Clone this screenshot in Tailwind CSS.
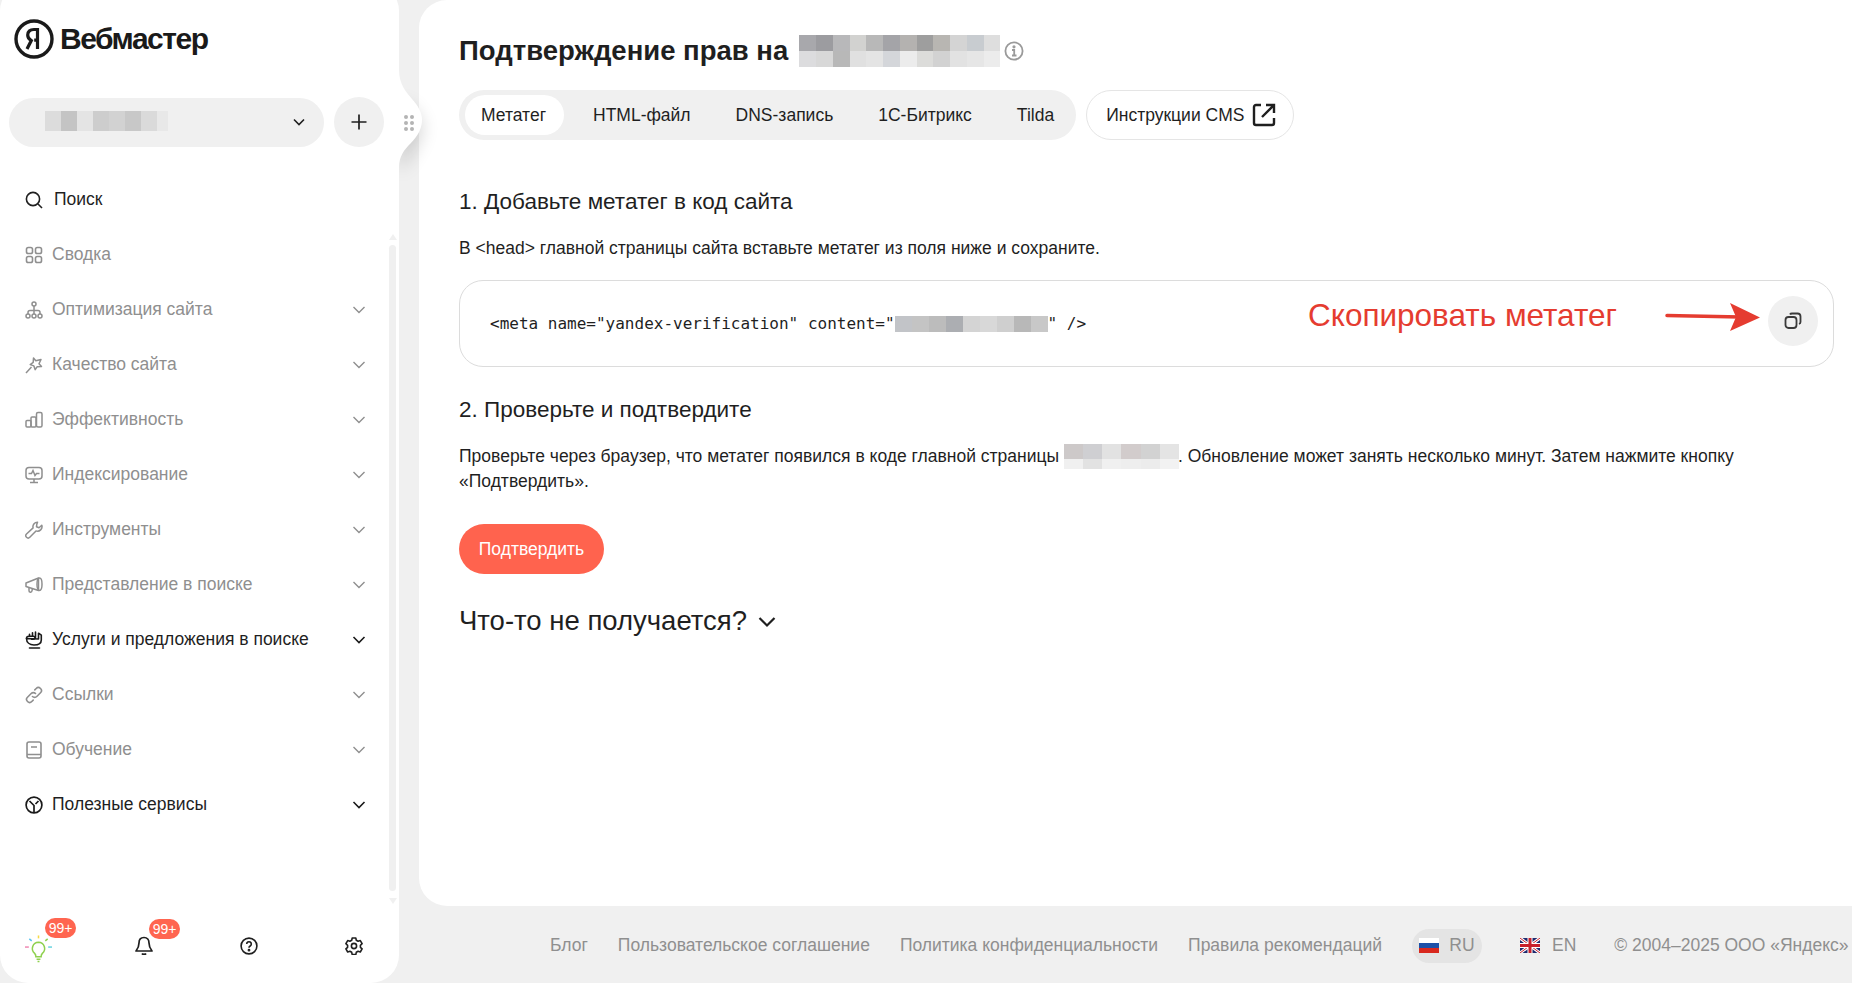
<!DOCTYPE html>
<html lang="ru">
<head>
    <meta charset="UTF-8">
    <title>Яндекс Вебмастер</title>
    <script src="https://cdn.jsdelivr.net/npm/@tailwindcss/browser@4"></script>
</head>
<body class="bg-[#f0f0f0] font-['Liberation_Sans',Arial,sans-serif] text-[#1f1f1f] overflow-hidden">
<div class="relative flex w-[1852px] h-[983px] overflow-hidden">

    <!-- Sidebar -->
    <aside class="relative z-10 w-[399px] shrink-0 h-[1000px] -mt-[17px] bg-white rounded-[28px] flex flex-col">
        <div class="h-[112px] pl-[14px] pt-[36px] flex items-start gap-[6px] shrink-0">
            <svg class="w-[40px] h-[40px] shrink-0" viewBox="0 0 40 40" fill="none">
                <circle cx="20" cy="20" r="18" stroke="#1a1a1a" stroke-width="3.400"/>
                <path d="M23.500 30V10.500h-3.600c-4 0-6.200 2.200-6.200 5.500 0 2.700 1.200 4.200 3.600 5.600L13 30M23.500 21.200h-3.300" stroke="#1a1a1a" stroke-width="3.200"/>
            </svg>
            <span class="text-[30px] leading-[40px] font-bold tracking-[-1.500px] text-[#1a1a1a]">Вебмастер</span>
        </div>
        <div class="flex items-center pl-[9px] mt-[2px] shrink-0">
            <div class="w-[315px] h-[49px] rounded-full bg-[#f0f0f0] flex items-center pl-[36px] pr-[17px] justify-between">
                <div class="flex w-[123px] h-[20px] -mt-[3px]">
                    <div class="w-[16px] bg-[#dcdcdc]"></div><div class="w-[16px] bg-[#c4c4c4]"></div><div class="w-[16px] bg-[#e4e4e4]"></div><div class="w-[16px] bg-[#cdcdcd]"></div><div class="w-[16px] bg-[#d2d2d2]"></div><div class="w-[16px] bg-[#c8c8c8]"></div><div class="w-[16px] bg-[#dadada]"></div><div class="w-[11px] bg-[#e8e8e8]"></div>
                </div>
                <svg class="w-[16px] h-[16px]" viewBox="0 0 16 16" fill="none"><path d="M3 5.500 8 10.500 13 5.500" stroke="#1f1f1f" stroke-width="1.600"/></svg>
            </div>
            <div class="ml-[10px] w-[50px] h-[50px] rounded-full bg-[#f0f0f0] flex items-center justify-center">
                <svg class="w-[18px] h-[18px]" viewBox="0 0 18 18" fill="none"><path d="M9 1.500v15M1.500 9h15" stroke="#1f1f1f" stroke-width="1.700"/></svg>
            </div>
        </div>

        <nav class="relative mt-[25px] pl-[25px] pr-[33px] text-[17.500px] shrink-0">
            <div class="h-[55px] flex items-center gap-[11px]">
                <svg class="w-[18px] h-[18px] shrink-0" viewBox="0 0 18 18" fill="none"><circle cx="8" cy="8" r="6.600" stroke="#1f1f1f" stroke-width="1.600"/><path d="m13 13 4 4" stroke="#1f1f1f" stroke-width="1.600"/></svg>
                <span>Поиск</span>
            </div>
            <div class="h-[55px] flex items-center gap-[9px] text-[#8f8f8f]">
                <svg class="w-[18px] h-[18px] shrink-0" viewBox="0 0 18 18" fill="none" stroke="#8f8f8f" stroke-width="1.600"><rect x="1.500" y="1.500" width="6" height="6" rx="1.800"/><rect x="10.500" y="1.500" width="6" height="6" rx="1.800"/><rect x="1.500" y="10.500" width="6" height="6" rx="1.800"/><rect x="10.500" y="10.500" width="6" height="6" rx="1.800"/></svg>
                <span>Сводка</span>
            </div>
            <div class="h-[55px] flex items-center gap-[9px] text-[#8f8f8f]">
                <svg class="w-[18px] h-[18px] shrink-0" viewBox="0 0 18 18" fill="none" stroke="#8f8f8f" stroke-width="1.500"><circle cx="9" cy="3" r="2"/><circle cx="3" cy="15" r="2"/><circle cx="9" cy="15" r="2"/><circle cx="15" cy="15" r="2"/><path d="M9 5v8M3 13v-1.500q0-2 2-2h8q2 0 2 2V13"/></svg>
                <span>Оптимизация сайта</span>
                <svg class="ml-auto w-[14px] h-[14px]" viewBox="0 0 14 14" fill="none"><path d="m1.500 4 5.500 5.500L12.500 4" stroke="#8f8f8f" stroke-width="1.400"/></svg>
            </div>
            <div class="h-[55px] flex items-center gap-[9px] text-[#8f8f8f]">
                <svg class="w-[18px] h-[18px] shrink-0" viewBox="0 0 18 18" fill="none" stroke="#8f8f8f" stroke-width="1.500"><path d="m8.500 2 2.300 2.700 5.200-1.200-2 4.300 2.500 2.700-4.300.2-2 3-1.300-3.800-3.700-1.300 3-2.200z" stroke-linejoin="round"/><path d="M6.500 11 1 17"/></svg>
                <span>Качество сайта</span>
                <svg class="ml-auto w-[14px] h-[14px]" viewBox="0 0 14 14" fill="none"><path d="m1.500 4 5.500 5.500L12.500 4" stroke="#8f8f8f" stroke-width="1.400"/></svg>
            </div>
            <div class="h-[55px] flex items-center gap-[9px] text-[#8f8f8f]">
                <svg class="w-[18px] h-[18px] shrink-0" viewBox="0 0 18 18" fill="none" stroke="#8f8f8f" stroke-width="1.500"><rect x="1" y="9.500" width="5" height="6.500" rx="1"/><rect x="6" y="6" width="5" height="10" rx="1"/><rect x="11.500" y="1.500" width="5.500" height="14.500" rx="1.500"/></svg>
                <span>Эффективность</span>
                <svg class="ml-auto w-[14px] h-[14px]" viewBox="0 0 14 14" fill="none"><path d="m1.500 4 5.500 5.500L12.500 4" stroke="#8f8f8f" stroke-width="1.400"/></svg>
            </div>
            <div class="h-[55px] flex items-center gap-[9px] text-[#8f8f8f]">
                <svg class="w-[18px] h-[18px] shrink-0" viewBox="0 0 18 18" fill="none" stroke="#8f8f8f" stroke-width="1.500"><rect x="1" y="1.500" width="16" height="11.500" rx="3"/><path d="M3.500 7.500h3l1.500-3 2 5 1.500-2h3M9 13v3M5 16.500h8"/></svg>
                <span>Индексирование</span>
                <svg class="ml-auto w-[14px] h-[14px]" viewBox="0 0 14 14" fill="none"><path d="m1.500 4 5.500 5.500L12.500 4" stroke="#8f8f8f" stroke-width="1.400"/></svg>
            </div>
            <div class="h-[55px] flex items-center gap-[9px] text-[#8f8f8f]">
                <svg class="w-[18px] h-[18px] shrink-0" viewBox="0 0 18 18" fill="none" stroke="#8f8f8f" stroke-width="1.500" stroke-linejoin="round"><path d="M12.500 1.200a4.500 4.500 0 0 0-4.400 5.700L1.500 13a2.200 2.200 0 0 0 3.300 3.300l6.200-6.400a4.500 4.500 0 0 0 5.800-5.600l-2.800 2.500-2.500-1 .3-2.500z"/></svg>
                <span>Инструменты</span>
                <svg class="ml-auto w-[14px] h-[14px]" viewBox="0 0 14 14" fill="none"><path d="m1.500 4 5.500 5.500L12.500 4" stroke="#8f8f8f" stroke-width="1.400"/></svg>
            </div>
            <div class="h-[55px] flex items-center gap-[9px] text-[#8f8f8f]">
                <svg class="w-[18px] h-[18px] shrink-0" viewBox="0 0 18 18" fill="none" stroke="#8f8f8f" stroke-width="1.500" stroke-linejoin="round"><path d="M13.500 2 1 7v3.500l12.500 4z"/><ellipse cx="14.500" cy="8.200" rx="2.500" ry="6.200"/><path d="M4 11.500v3a1.500 1.500 0 0 0 3 .3l.3-2"/></svg>
                <span>Представление в поиске</span>
                <svg class="ml-auto w-[14px] h-[14px]" viewBox="0 0 14 14" fill="none"><path d="m1.500 4 5.500 5.500L12.500 4" stroke="#8f8f8f" stroke-width="1.400"/></svg>
            </div>
            <div class="h-[55px] flex items-center gap-[9px]">
                <svg class="w-[18px] h-[18px] shrink-0" viewBox="0 0 18 18" fill="none" stroke="#1a1a1a" stroke-width="1.600" stroke-linejoin="round" stroke-linecap="round"><path d="M1.500 7.500c0-1.500 1-2.200 2.500-2.200h4.300c1.100 0 1.700.7 1.700 1.500S9.300 8.300 8.200 8.300H6.500"/><path d="M4.500 5.300V3.200M7.500 5.300V1.800M10.500 6.500V1M13.500 8V2.200l2.800 2V9c0 3.500-3 5-7.300 5S1.500 11.500 1.500 7.500z"/><path d="M4.500 17h10"/></svg>
                <span>Услуги и предложения в поиске</span>
                <svg class="ml-auto w-[14px] h-[14px]" viewBox="0 0 14 14" fill="none"><path d="m1.500 4 5.500 5.500L12.500 4" stroke="#1a1a1a" stroke-width="1.600"/></svg>
            </div>
            <div class="h-[55px] flex items-center gap-[9px] text-[#8f8f8f]">
                <svg class="w-[18px] h-[18px] shrink-0" viewBox="0 0 18 18" fill="none" stroke="#8f8f8f" stroke-width="1.600" stroke-linecap="round"><path d="M7.500 10.500a3 3 0 0 0 4.300 0l3.700-3.700a3 3 0 0 0-4.300-4.300L9.800 3.900"/><path d="M10.500 7.500a3 3 0 0 0-4.300 0l-3.700 3.700a3 3 0 0 0 4.300 4.300l1.400-1.400"/></svg>
                <span>Ссылки</span>
                <svg class="ml-auto w-[14px] h-[14px]" viewBox="0 0 14 14" fill="none"><path d="m1.500 4 5.500 5.500L12.500 4" stroke="#8f8f8f" stroke-width="1.400"/></svg>
            </div>
            <div class="h-[55px] flex items-center gap-[9px] text-[#8f8f8f]">
                <svg class="w-[18px] h-[18px] shrink-0" viewBox="0 0 18 18" fill="none" stroke="#8f8f8f" stroke-width="1.600"><rect x="2" y="1" width="14" height="16" rx="2"/><path d="M2 13.500h14M6 6h6"/></svg>
                <span>Обучение</span>
                <svg class="ml-auto w-[14px] h-[14px]" viewBox="0 0 14 14" fill="none"><path d="m1.500 4 5.500 5.500L12.500 4" stroke="#8f8f8f" stroke-width="1.400"/></svg>
            </div>
            <div class="h-[55px] flex items-center gap-[9px]">
                <svg class="w-[18px] h-[18px] shrink-0" viewBox="0 0 18 18" fill="none" stroke="#1a1a1a" stroke-width="1.700"><circle cx="9" cy="9" r="7.900"/><path d="M4.500 5 9 9.500V16M13.500 5 10.500 8"/></svg>
                <span>Полезные сервисы</span>
                <svg class="ml-auto w-[14px] h-[14px]" viewBox="0 0 14 14" fill="none"><path d="m1.500 4 5.500 5.500L12.500 4" stroke="#1a1a1a" stroke-width="1.600"/></svg>
            </div>

            <!-- Scrollbar -->
            <div class="absolute right-[3px] top-[62px] w-[7px] h-[670px] flex flex-col items-center">
                <div class="w-0 h-0 border-x-[4px] border-x-transparent border-b-[6px] border-b-[#f0f0f0]"></div>
                <div class="mt-[5px] w-[7px] flex-1 rounded-full bg-[#f0f0f0]"></div>
                <div class="mt-[7px] w-0 h-0 border-x-[4px] border-x-transparent border-t-[6px] border-t-[#f0f0f0]"></div>
            </div>
        </nav>

        <div class="mt-auto h-[55px] pl-[25px] pr-[31px] mb-[10px] flex items-center justify-between">
            <div class="relative w-[28px] h-[28px] flex justify-center">
                <svg class="w-[30px] h-[30px] -ml-[1px] mt-[2px]" viewBox="0 0 30 30" fill="none" stroke-width="1.600">
                    <path d="M15 8a6.500 6.500 0 0 0-4 11.500c1 1 1.300 2 1.300 3.500h5.400c0-1.500.3-2.500 1.300-3.500A6.500 6.500 0 0 0 15 8zM13 25.500h4M14 28h2" stroke="#8fd14f"/>
                    <path d="M15 1v3" stroke="#f6da45"/><path d="m5.500 4.500 2.500 2" stroke="#5cc5f0"/><path d="m24.500 4.500-2.500 2" stroke="#8fd14f"/><path d="M1 13h4" stroke="#f08cb5"/><path d="M25 13h4" stroke="#6ed5e0"/>
                </svg>
                <span class="absolute left-[20px] -top-[14px] w-[31px] h-[20px] rounded-full bg-[#ff6550] text-white text-[14px] leading-[20px] text-center">99+</span>
            </div>
            <div class="relative w-[28px] h-[28px] flex items-center justify-center">
                <svg class="w-[20px] h-[20px]" viewBox="0 0 20 20" fill="none" stroke="#1f1f1f" stroke-width="1.700" stroke-linejoin="round"><path d="M10 1.500c-3.300 0-5 2.500-5 5.500 0 4-1 5.500-3 8h16c-2-2.500-3-4-3-8 0-3-1.700-5.500-5-5.500zM8 17.500c.5 1 3.500 1 4 0"/></svg>
                <span class="absolute left-[19px] -top-[13px] w-[31px] h-[20px] rounded-full bg-[#ff6550] text-white text-[14px] leading-[20px] text-center">99+</span>
            </div>
            <div class="w-[28px] h-[28px] flex items-center justify-center">
                <svg class="w-[18px] h-[18px]" viewBox="0 0 18 18" fill="none" stroke="#1f1f1f" stroke-width="1.600"><circle cx="9" cy="9" r="7.900"/><path d="M6.700 7a2.300 2.300 0 1 1 3.500 2c-.8.500-1.200 1-1.200 1.800"/><circle cx="9" cy="13.200" r=".6" fill="#1f1f1f"/></svg>
            </div>
            <div class="w-[28px] h-[28px] flex items-center justify-center">
                <svg class="w-[18px] h-[18px]" viewBox="0 0 18 18" fill="none" stroke="#1f1f1f" stroke-width="1.600" stroke-linejoin="round"><path d="M7.200 1h3.600l.5 2.300 1.800 1 2.200-.7 1.800 3.100-1.700 1.600v2l1.700 1.600-1.800 3.100-2.200-.7-1.800 1-.5 2.300H7.200l-.5-2.300-1.800-1-2.200.7-1.800-3.100 1.700-1.600v-2L.9 6.700l1.800-3.100 2.200.7 1.800-1z"/><circle cx="9" cy="9" r="2.600"/></svg>
            </div>
        </div>
    </aside>

    <!-- Drag handle bump: its shadow stays to the right of the sidebar edge -->
    <svg class="absolute z-20 left-[398px] top-[70px] overflow-visible" width="30" height="100" viewBox="0 0 30 100" fill="none">
        <defs>
            <filter id="bump" x="-150%" y="-40%" width="400%" height="180%"><feGaussianBlur stdDeviation="9"/></filter>
            <clipPath id="bump-clip"><rect x="1" y="-40" width="80" height="190"/></clipPath>
        </defs>
        <g clip-path="url(#bump-clip)"><path d="M1 30C14 38 24 46 24 58S12 84 1 104z" fill="#000" opacity=".17" filter="url(#bump)"/></g>
        <path d="M1 0C1 14 8 22 14 29 20 36 24 42 24 50 24 58 20 66 13 73 6 80 1 86 1 98z" fill="#fff"/>
    </svg>
    <div class="absolute z-20 left-[404px] top-[115px] grid grid-cols-2 gap-x-[2px] gap-y-[2px]">
        <i class="w-[4px] h-[4px] rounded-full bg-[#b4b4b4]"></i><i class="w-[4px] h-[4px] rounded-full bg-[#b4b4b4]"></i>
        <i class="w-[4px] h-[4px] rounded-full bg-[#b4b4b4]"></i><i class="w-[4px] h-[4px] rounded-full bg-[#b4b4b4]"></i>
        <i class="w-[4px] h-[4px] rounded-full bg-[#b4b4b4]"></i><i class="w-[4px] h-[4px] rounded-full bg-[#b4b4b4]"></i>
    </div>

    <!-- Right column -->
    <div class="flex-1 min-w-0 flex flex-col pl-[20px]">
        <main class="h-[906px] bg-white rounded-l-[28px] pl-[40px] pr-[18px] pt-[33px] shrink-0">
            <div class="flex items-center h-[36px]">
                <h1 class="text-[27.500px] leading-[36px] font-bold">Подтверждение прав на</h1>
                <div class="ml-[11px] w-[201px] h-[32px] flex flex-col">
                    <div class="flex flex-1">
                        <div class="flex-1 bg-[#a8a8ac]"></div><div class="flex-1 bg-[#9c9ca0]"></div><div class="flex-1 bg-[#b8b8ba]"></div><div class="flex-1 bg-[#d2d2d0]"></div><div class="flex-1 bg-[#b8b8b8]"></div><div class="flex-1 bg-[#a4a4a8]"></div><div class="flex-1 bg-[#b4b2b0]"></div><div class="flex-1 bg-[#9e9e9e]"></div><div class="flex-1 bg-[#b8b6b2]"></div><div class="flex-1 bg-[#d4d4d4]"></div><div class="flex-1 bg-[#c8ccd0]"></div><div class="flex-1 bg-[#dedede]"></div>
                    </div>
                    <div class="flex flex-1">
                        <div class="flex-1 bg-[#dcdcde]"></div><div class="flex-1 bg-[#d8d8d8]"></div><div class="flex-1 bg-[#b8b8b8]"></div><div class="flex-1 bg-[#e0e0e0]"></div><div class="flex-1 bg-[#e4e4e4]"></div><div class="flex-1 bg-[#d4d6da]"></div><div class="flex-1 bg-[#ececec]"></div><div class="flex-1 bg-[#dcdcda]"></div><div class="flex-1 bg-[#d2d2d2]"></div><div class="flex-1 bg-[#e2e2e2]"></div><div class="flex-1 bg-[#e6e6e6]"></div><div class="flex-1 bg-[#ececec]"></div>
                    </div>
                </div>
                <svg class="ml-[4px] w-[20px] h-[20px]" viewBox="0 0 20 20" fill="none" stroke="#9a9a9a" stroke-width="1.800"><circle cx="10" cy="10" r="8.600"/><path d="M8 9h2.200v5.500M8 14.500h4.500"/><circle cx="10" cy="5.800" r=".7" fill="#9a9a9a"/></svg>
            </div>

            <div class="mt-[21px] flex items-center gap-[10px]">
                <div class="h-[50px] py-[5px] pr-[6px] pl-[6px] bg-[#f0f0f0] rounded-full flex items-center gap-[13px] text-[17.500px]">
                    <span class="h-[40px] px-[16px] rounded-full bg-white flex items-center w-[99px]">Метатег</span>
                    <span class="px-[16px]">HTML-файл</span>
                    <span class="px-[16px]">DNS-запись</span>
                    <span class="px-[16px]">1С-Битрикс</span>
                    <span class="px-[16px]">Tilda</span>
                </div>
                <div class="h-[50px] w-[208px] border border-[#e5e5e5] rounded-full flex items-center pl-[19px] gap-[7px] text-[17.500px]">
                    <span>Инструкции CMS</span>
                    <svg class="w-[26px] h-[26px]" viewBox="0 0 26 26" fill="none" stroke="#1f1f1f" stroke-width="2.400"><path d="M10 3H5a2 2 0 0 0-2 2v16a2 2 0 0 0 2 2h16a2 2 0 0 0 2-2v-5M15 3h8v8M23 3 11 15"/></svg>
                </div>
            </div>

            <h2 class="mt-[47px] text-[22.500px] leading-[30px]">1. Добавьте метатег в код сайта</h2>
            <p class="mt-[19px] text-[17.500px] leading-[25px]">В &lt;head&gt; главной страницы сайта вставьте метатег из поля ниже и сохраните.</p>

            <div class="relative mt-[19px] h-[87px] border border-[#dcdcdc] rounded-[24px] pl-[30px] flex items-center font-['DejaVu_Sans_Mono',monospace] text-[16px] whitespace-pre">
                <span>&lt;meta name="yandex-verification" content="</span><span class="w-[153px] h-[16px] flex shrink-0"><i class="flex-1 bg-[#c2c4c8]"></i><i class="flex-1 bg-[#c4c4c4]"></i><i class="flex-1 bg-[#bcbcbc]"></i><i class="flex-1 bg-[#acaeb2]"></i><i class="flex-1 bg-[#d4d4d4]"></i><i class="flex-1 bg-[#d8d8d8]"></i><i class="flex-1 bg-[#cfcfcf]"></i><i class="flex-1 bg-[#b8b8b8]"></i><i class="flex-1 bg-[#c8c8c8]"></i></span><span>" /&gt;</span>
                <div class="absolute right-[15px] top-[15px] w-[50px] h-[50px] rounded-full bg-[#f0f0f0] flex items-center justify-center">
                    <svg class="w-[18px] h-[18px]" viewBox="0 0 18 18" fill="none" stroke="#3a3a3a" stroke-width="1.800"><rect x="1.500" y="5" width="11" height="11" rx="3"/><path d="M6 2.500Q6.500 1.500 8 1.500h5.500q3 0 3 3V10q0 1.500-1.500 2"/></svg>
                </div>
            </div>

            <h2 class="mt-[28px] text-[22.500px] leading-[30px]">2. Проверьте и подтвердите</h2>
            <p class="mt-[19px] -mb-[1px] text-[17.500px] leading-[25px]">Проверьте через браузер, что метатег появился в коде главной страницы <span class="inline-flex flex-col align-top w-[115px] h-[25px] -mr-[1px]"><span class="flex flex-[3]"><i class="flex-1 bg-[#cdc9c9]"></i><i class="flex-1 bg-[#cfcfd2]"></i><i class="flex-1 bg-[#e2e2e2]"></i><i class="flex-1 bg-[#d2cccc]"></i><i class="flex-1 bg-[#d2d2d2]"></i><i class="flex-1 bg-[#e4e4e4]"></i></span><span class="flex flex-[2]"><i class="flex-1 bg-[#f0f0f0]"></i><i class="flex-1 bg-[#e2e2e2]"></i><i class="flex-1 bg-[#f0f0f0]"></i><i class="flex-1 bg-[#eeeeee]"></i><i class="flex-1 bg-[#ececec]"></i><i class="flex-1 bg-[#f2f2f2]"></i></span></span>. Обновление может занять несколько минут. Затем нажмите кнопку<br>«Подтвердить».</p>

            <button class="mt-[31px] block h-[50px] w-[145px] rounded-full bg-[#ff634e] text-white text-[17.500px]">Подтвердить</button>

            <div class="mt-[29px] flex items-center gap-[10px] text-[27.500px] leading-[36px]">
                <span>Что-то не получается?</span>
                <svg class="w-[20px] h-[20px] mt-[2px]" viewBox="0 0 20 20" fill="none"><path d="m2.500 6 7.500 7.500L17.500 6" stroke="#1f1f1f" stroke-width="2.200"/></svg>
            </div>
        </main>

        <footer class="flex-1 flex items-center gap-[30px] pl-[131px] pt-[2px] text-[17.500px] text-[#8f8f8f] whitespace-nowrap">
            <span>Блог</span>
            <span>Пользовательское соглашение</span>
            <span>Политика конфиденциальности</span>
            <span>Правила рекомендаций</span>
            <span class="h-[34px] w-[70px] rounded-full bg-[#e4e4e4] flex items-center justify-center gap-[10px]">
                <svg class="w-[20px] h-[15px]" viewBox="0 0 20 15"><rect width="20" height="5" fill="#fff"/><rect y="5" width="20" height="5" fill="#1c50a8"/><rect y="10" width="20" height="5" fill="#d8281e"/></svg>
                RU
            </span>
            <span class="ml-[8px] flex items-center gap-[12px]">
                <svg class="w-[20px] h-[15px]" viewBox="0 0 20 15"><rect width="20" height="15" fill="#1f2a6e"/><path d="M0 0l20 15M20 0 0 15" stroke="#fff" stroke-width="3"/><path d="M0 0l20 15M20 0 0 15" stroke="#c8202c" stroke-width="1"/><path d="M10 0v15M0 7.500h20" stroke="#fff" stroke-width="5"/><path d="M10 0v15M0 7.500h20" stroke="#c8202c" stroke-width="3"/></svg>
                EN
            </span>
            <span class="ml-[8px]">© 2004–2025 ООО «Яндекс»</span>
        </footer>
    </div>

    <!-- Annotation added over the screenshot -->
    <span class="absolute left-[1308px] top-[296px] text-[31.500px] leading-[38px] text-[#e53c30]">Скопировать метатег</span>
    <svg class="absolute left-[1664px] top-[300px]" width="100" height="36" viewBox="0 0 100 36" fill="none">
        <path d="M3 15.500 76 17" stroke="#e53c30" stroke-width="3.500" stroke-linecap="round"/>
        <path d="M66 3 96 17.500 66 31 72 17z" fill="#e53c30"/>
    </svg>
</div>
</body>
</html>
